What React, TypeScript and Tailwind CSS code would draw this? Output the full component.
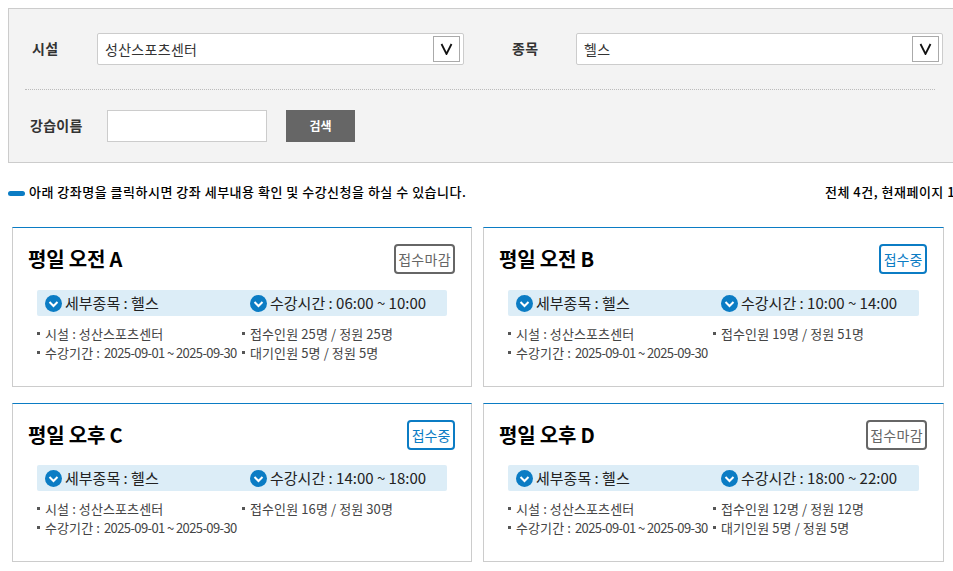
const courses = [
  { title: '평일 오전 A', open: false, time: '06:00 ~ 10:00', apply: '접수인원 25명 / 정원 25명', wait: '대기인원 5명 / 정원 5명' },
  { title: '평일 오전 B', open: true, time: '10:00 ~ 14:00', apply: '접수인원 19명 / 정원 51명', wait: '' },
  { title: '평일 오후 C', open: true, time: '14:00 ~ 18:00', apply: '접수인원 16명 / 정원 30명', wait: '' },
  { title: '평일 오후 D', open: false, time: '18:00 ~ 22:00', apply: '접수인원 12명 / 정원 12명', wait: '대기인원 5명 / 정원 5명' },
];

function SelectBox({ value }: { value: string }) {
  return (
    <div className="w-[367px] h-[32px] shrink-0 bg-white border border-[#ccc] rounded-[2px] flex items-center justify-between pl-[7px] pr-[3px]">
      <span className="text-[14px] text-[#333] tracking-[0.3px]">{value}</span>
      <span className="w-[27px] h-[26px] border border-[#aaa] flex items-center justify-center">
        <svg width="13" height="12" viewBox="0 0 13 12" fill="none" stroke="#111" strokeWidth="1.8">
          <path d="M1.5 1 L6.5 11 L11.5 1" />
        </svg>
      </span>
    </div>
  );
}

function Chevron() {
  return (
    <svg width="17" height="17" viewBox="0 0 17 17" className="shrink-0">
      <circle cx="8.5" cy="8.5" r="8.5" fill="#0b7cc4" />
      <path d="M4.5 7 L8.5 11 L12.5 7" fill="none" stroke="#fff" strokeWidth="2" />
    </svg>
  );
}

function Bullet({ children }: { children: React.ReactNode }) {
  return (
    <div className="flex items-center h-[19px] whitespace-nowrap">
      <span className="w-[3px] h-[3px] bg-[#555] mr-[5px] shrink-0" />
      {children}
    </div>
  );
}

function CourseCard({ course, lower }: { course: (typeof courses)[number]; lower: boolean }) {
  return (
    <div className={`${lower ? 'h-[159px]' : 'h-[160px]'} border border-[#ccc] border-t-[#0b7cc4] pt-[16px] px-[15px] bg-white`}>
      <div className="flex items-center justify-between pr-[1px] h-[30px]">
        <h3 className="text-[20px] font-bold text-black tracking-[-0.2px]">{course.title}</h3>
        {course.open ? (
          <span className="h-[30px] w-[48px] justify-center flex items-center border-2 border-[#0b7cc4] rounded-[4px] text-[14px] text-[#0b7cc4]">접수중</span>
        ) : (
          <span className="h-[30px] w-[61px] justify-center flex items-center border-2 border-[#666] rounded-[4px] text-[14px] text-[#666] tracking-[0.3px]">접수마감</span>
        )}
      </div>
      <div className={`${lower ? 'mt-[15px]' : 'mt-[16px]'} ml-[9px] mr-[9px] h-[26px] bg-[#dcedf7] rounded-[2px] grid grid-cols-[205px_1fr] items-center pl-[8px] text-[15px] text-[#222]`}>
        <div className="flex items-center gap-[3px]"><Chevron /><span>세부종목 : 헬스</span></div>
        <div className="flex items-center gap-[3px]"><Chevron /><span>수강시간 : {course.time}</span></div>
      </div>
      <div className="mt-[8px] ml-[9px] grid grid-cols-[205px_1fr] text-[13px] text-[#444] leading-[19px]">
        <Bullet><span className="tracking-[0.1px]">시설 : 성산스포츠센터</span></Bullet>
        <Bullet><span className="tracking-[0.1px]">{course.apply}</span></Bullet>
        <Bullet><span className="tracking-[0.1px]">수강기간 :</span><span className="ml-[4px] tracking-[-0.6px]">2025-09-01 ~ 2025-09-30</span></Bullet>
        {course.wait ? <Bullet><span className="tracking-[0.1px]">{course.wait}</span></Bullet> : <div />}
      </div>
    </div>
  );
}

export default function App() {
  return (
    <div className="w-[953px] h-[571px] overflow-hidden bg-white pl-[8px] pt-[8px] font-['Noto_Sans_CJK_KR','Noto_Sans',sans-serif]">
      {/* Search Panel */}
      <div className="w-[960px] h-[155px] bg-[#f3f3f3] border border-[#ccc] pt-[24px] pl-[16px]">
        <div className="w-[910px] h-[57px] border-b border-dotted border-[#bbb]">
          <div className="flex items-start">
            <label className="w-[72px] shrink-0 pl-[7px] pb-[1px] h-[32px] flex items-center text-[14px] font-bold text-[#333] tracking-[0.3px]">시설</label>
            <SelectBox value="성산스포츠센터" />
            <label className="w-[112px] shrink-0 pl-[48px] pb-[1px] h-[32px] flex items-center text-[14px] font-bold text-[#333] tracking-[0.3px]">종목</label>
            <SelectBox value="헬스" />
          </div>
        </div>
        <div className="flex items-center mt-[20px] w-[910px]">
          <label className="w-[82px] pl-[5px] pb-[1px] text-[14px] font-bold text-[#333] tracking-[0.3px]">강습이름</label>
          <input className="w-[160px] h-[32px] bg-white border border-[#ccc]" />
          <button className="ml-[19px] w-[69px] h-[32px] pb-[1px] bg-[#666] text-white text-[12px] font-bold">검색</button>
        </div>
      </div>

      {/* Guide Text */}
      <div className="mt-[19px] flex items-center w-[960px] h-[20px]">
        <span className="w-[17px] h-[5px] mt-[3px] rounded-full bg-[#0b7cc4] mr-[4px] shrink-0" />
        <span className="w-[796px] shrink-0 text-[13px] font-medium text-black tracking-[0.5px] whitespace-nowrap">아래 강좌명을 클릭하시면 강좌 세부내용 확인 및 수강신청을 하실 수 있습니다.</span>
        <span className="shrink-0 text-[13px] font-medium text-black tracking-[0.5px] whitespace-nowrap">전체 4건, 현재페이지 1/1</span>
      </div>

      {/* Course Cards */}
      <div className="mt-[25px] ml-[4px] w-[932px] grid grid-cols-[460px_461px] items-start gap-x-[11px] gap-y-[16px]">
        {courses.map((c, i) => (
          <CourseCard key={c.title} course={c} lower={i >= 2} />
        ))}
      </div>
    </div>
  );
}
